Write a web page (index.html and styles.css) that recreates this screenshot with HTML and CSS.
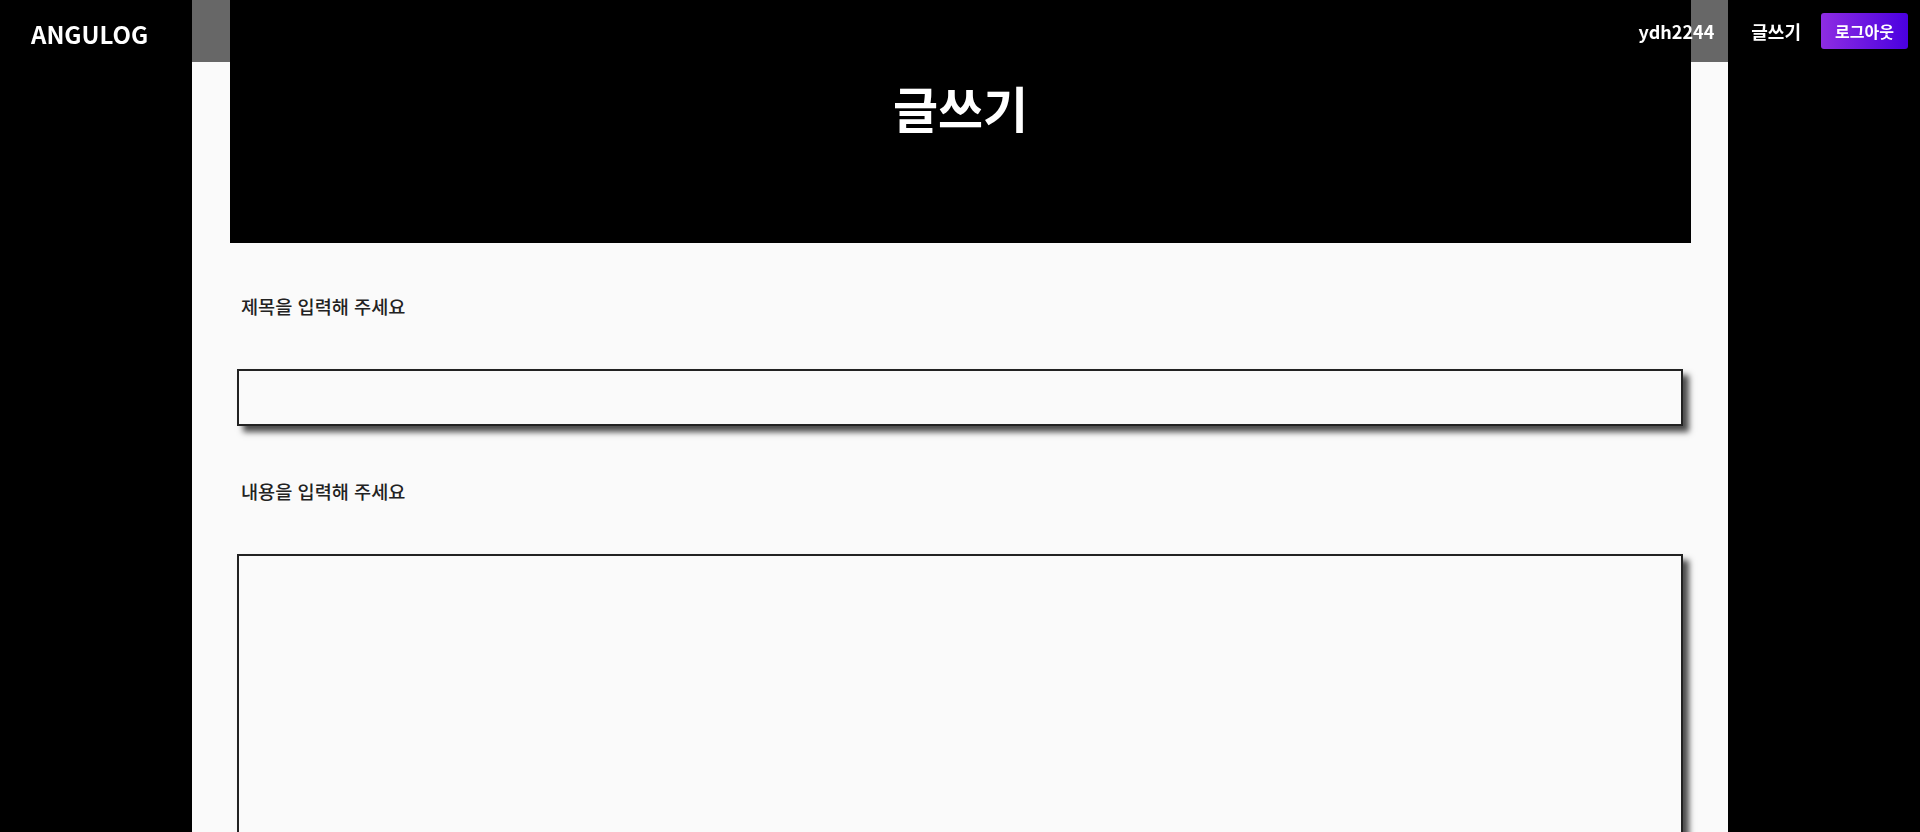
FILE: index.html
```html
<!DOCTYPE html>
<html lang="ko">
<head>
<meta charset="utf-8">
<title>ANGULOG - 글쓰기</title>
<link rel="stylesheet" href="styles.css">
</head>
<body>
<header class="topbar">
  <a class="logo" href="#">ANGULOG</a>
  <nav class="nav">
    <span class="nav-user">ydh2244</span>
    <a class="nav-link" href="#">글쓰기</a>
    <button class="nav-btn" type="button">로그아웃</button>
  </nav>
</header>
<main class="panel">
  <section class="hero">
    <h1 class="hero-title">글쓰기</h1>
  </section>
  <form class="form">
    <label class="label label-title" for="title">제목을 입력해 주세요</label>
    <input class="field" id="title" type="text">
    <label class="label label-body" for="body">내용을 입력해 주세요</label>
    <textarea class="field area" id="body"></textarea>
  </form>
</main>
</body>
</html>
```
FILE: styles.css
```css
* { box-sizing: border-box; }
html, body {
  margin: 0;
  padding: 0;
  background: #000;
  font-family: "Noto Sans CJK KR", "Noto Sans", sans-serif;
}
.topbar {
  position: fixed;
  top: 0;
  left: 0;
  right: 0;
  height: 62px;
  background: rgba(0, 0, 0, 0.59);
  display: flex;
  align-items: center;
  justify-content: space-between;
  padding: 0 12px 0 31px;
  z-index: 10;
}
.logo {
  color: #fff;
  font-size: 24px;
  font-weight: 700;
  text-decoration: none;
  margin-top: 4px;
}
.nav {
  display: flex;
  align-items: center;
}
.nav-user, .nav-link {
  color: #fff;
  font-size: 18px;
  font-weight: 700;
  text-decoration: none;
}
.nav-user { margin-right: 37px; }
.nav-link { margin-right: 20px; }
.nav-btn {
  height: 36px;
  width: 87px;
  padding: 0;
  border: none;
  border-radius: 3px;
  background: linear-gradient(to right, #8e2de2, #4a00e0);
  color: #fff;
  font-family: inherit;
  font-size: 16px;
  font-weight: 700;
}
.panel {
  width: 1536px;
  margin: 0 auto;
  background: #fafafa;
  min-height: 100vh;
  padding-bottom: 60px;
}
.hero {
  margin: 0 37px 0 38px;
  height: 243px;
  background: #000;
  padding-top: 71px;
  text-align: center;
}
.hero-title {
  margin: 0;
  color: #fff;
  font-size: 49px;
  font-weight: 700;
  line-height: 72px;
}
.form {
  display: flex;
  flex-direction: column;
  padding: 50px 45px 0;
}
.label {
  display: block;
  margin-left: 4px;
  color: #222;
  font-size: 18.6px;
  font-weight: 500;
  line-height: 26px;
}
.label-title { margin-bottom: 50px; }
.label-body { margin-bottom: 50px; }
.field {
  display: block;
  width: 100%;
  height: 57px;
  border: 2px solid #222;
  background: #fafafa;
  box-shadow: 6px 6px 6px rgba(0, 0, 0, 0.7);
  font-family: inherit;
  font-size: 16px;
  outline: none;
  margin: 0 0 52px;
}
.area {
  height: 420px;
  resize: none;
}
```
